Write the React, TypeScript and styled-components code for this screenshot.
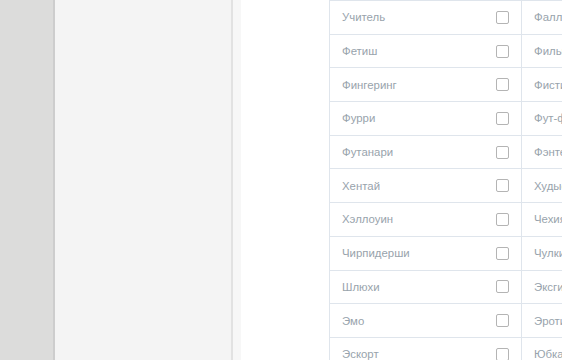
import React from 'react';
import styled, { createGlobalStyle } from 'styled-components';

const GlobalStyle = createGlobalStyle`
  html, body {
    margin: 0;
    padding: 0;
    height: 100%;
    overflow: hidden;
    background: #ffffff;
    font-family: 'Liberation Sans', Arial, sans-serif;
  }
  #root {
    height: 100%;
  }
`;

const leftTags = [
  'Учитель',
  'Фетиш',
  'Фингеринг',
  'Фурри',
  'Футанари',
  'Хентай',
  'Хэллоуин',
  'Чирпидерши',
  'Шлюхи',
  'Эмо',
  'Эскорт',
];

const rightTags = [
  'Фаллоимитатор',
  'Фильмы',
  'Фистинг',
  'Фут-фетиш',
  'Фэнтези',
  'Худые',
  'Чехия',
  'Чулки',
  'Эксгибиционизм',
  'Эротика',
  'Юбка',
];

const Page = styled.div`
  display: flex;
  height: 360px;
  width: 562px;
  overflow: hidden;
`;

const Rail = styled.div`
  width: 53px;
  flex-shrink: 0;
  background: #dcdcdb;
  border-right: 2px solid #cdcdcd;
`;

const SidePanel = styled.div`
  width: 176px;
  flex-shrink: 0;
  background: #f4f4f4;
  border-right: 2px solid #e2e2e2;
`;

const Gutter = styled.div`
  width: 8px;
  flex-shrink: 0;
  background: #f7f7f7;
`;

const Main = styled.div`
  flex: 1;
  background: #ffffff;
  padding-left: 88px;
  overflow: hidden;
`;

const Table = styled.div`
  display: grid;
  grid-template-columns: 192px 192px;
  border-top: 1px solid #dfe5ec;
  border-left: 1px solid #dfe5ec;
  width: 384px;
`;

const Cell = styled.div`
  display: flex;
  align-items: center;
  justify-content: space-between;
  height: 32.7px;
  padding: 0 12px 0 12px;
  border-right: 1px solid #dfe5ec;
  border-bottom: 1px solid #dfe5ec;
  font-size: 11.4px;
  color: #98a3ac;
  white-space: nowrap;
`;

const Box = styled.span`
  width: 11px;
  height: 11px;
  border: 1px solid #b4b4b4;
  border-radius: 2px;
  background: #ffffff;
  flex-shrink: 0;
`;

export default function App() {
  return (
    <>
      <GlobalStyle />
      <Page>
        <Rail />
        <SidePanel />
        <Gutter />
        <Main>
          <Table>
            {leftTags.map((tag, i) => (
              <React.Fragment key={tag}>
                <Cell>
                  {tag}
                  <Box />
                </Cell>
                <Cell>
                  {rightTags[i]}
                  <Box />
                </Cell>
              </React.Fragment>
            ))}
          </Table>
        </Main>
      </Page>
    </>
  );
}
